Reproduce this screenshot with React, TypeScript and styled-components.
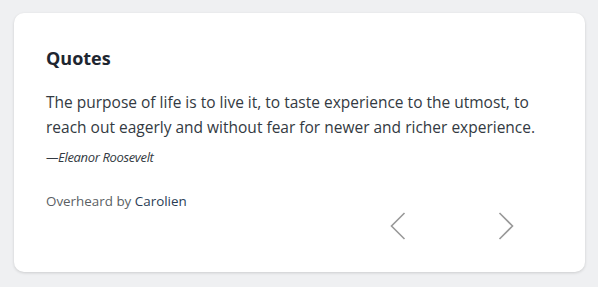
import React from "react";
import styled, { createGlobalStyle } from "styled-components";

const Global = createGlobalStyle`
  html, body { margin: 0; padding: 0; background: #eff0f2; }
  body { font-family: "Open Sans", Lato, sans-serif; }
`;

const Page = styled.div`
  padding: 13px 13px 15px 14px;
`;

const Card = styled.section`
  width: 571px;
  height: 259px;
  box-sizing: border-box;
  background: #fff;
  border-radius: 10px;
  box-shadow: 0 1px 3px rgba(0, 0, 0, 0.15);
  padding: 33px 32px 0 32px;
  display: flex;
  flex-direction: column;
`;

const Title = styled.h2`
  margin: 0;
  font-size: 18px;
  line-height: 24px;
  font-weight: 700;
  color: #1e2630;
`;

const Quote = styled.p`
  margin: 20px 0 0;
  font-size: 15.5px;
  line-height: 25px;
  color: #333a42;
`;

const Author = styled.p`
  margin: 7px 0 0;
  font-size: 13px;
  line-height: 20px;
  letter-spacing: -0.35px;
  font-style: italic;
  color: #333a42;
`;

const Credit = styled.p`
  margin: 24px 0 0;
  font-size: 13.4px;
  line-height: 20px;
  color: #5b5f64;
`;

const Name = styled.span`
  color: #2a3d55;
`;

const Nav = styled.div`
  display: flex;
  justify-content: flex-end;
  gap: 68px;
  padding-right: 27px;
  margin-top: -5px;
`;

const NavButton = styled.button`
  width: 40px;
  height: 40px;
  border: 0;
  background: none;
  padding: 0;
  display: flex;
  align-items: center;
  justify-content: center;
  cursor: pointer;
  color: #999;
`;

const Chevron = ({ dir }: { dir: "left" | "right" }) => (
  <svg width="16" height="28" viewBox="0 0 16 28" fill="none" stroke="currentColor" strokeWidth="1.6">
    {dir === "left" ? <path d="M14.5 1 L1.5 14 L14.5 27" /> : <path d="M1.5 1 L14.5 14 L1.5 27" />}
  </svg>
);

export default function App() {
  return (
    <Page>
      <Global />
      <Card>
        <Title>Quotes</Title>
        <Quote>
          The purpose of life is to live it, to taste experience to the utmost, to reach out eagerly and without fear for newer and richer experience.
        </Quote>
        <Author>—Eleanor Roosevelt</Author>
        <Credit>
          Overheard by <Name>Carolien</Name>
        </Credit>
        <Nav>
          <NavButton aria-label="Previous">
            <Chevron dir="left" />
          </NavButton>
          <NavButton aria-label="Next">
            <Chevron dir="right" />
          </NavButton>
        </Nav>
      </Card>
    </Page>
  );
}
